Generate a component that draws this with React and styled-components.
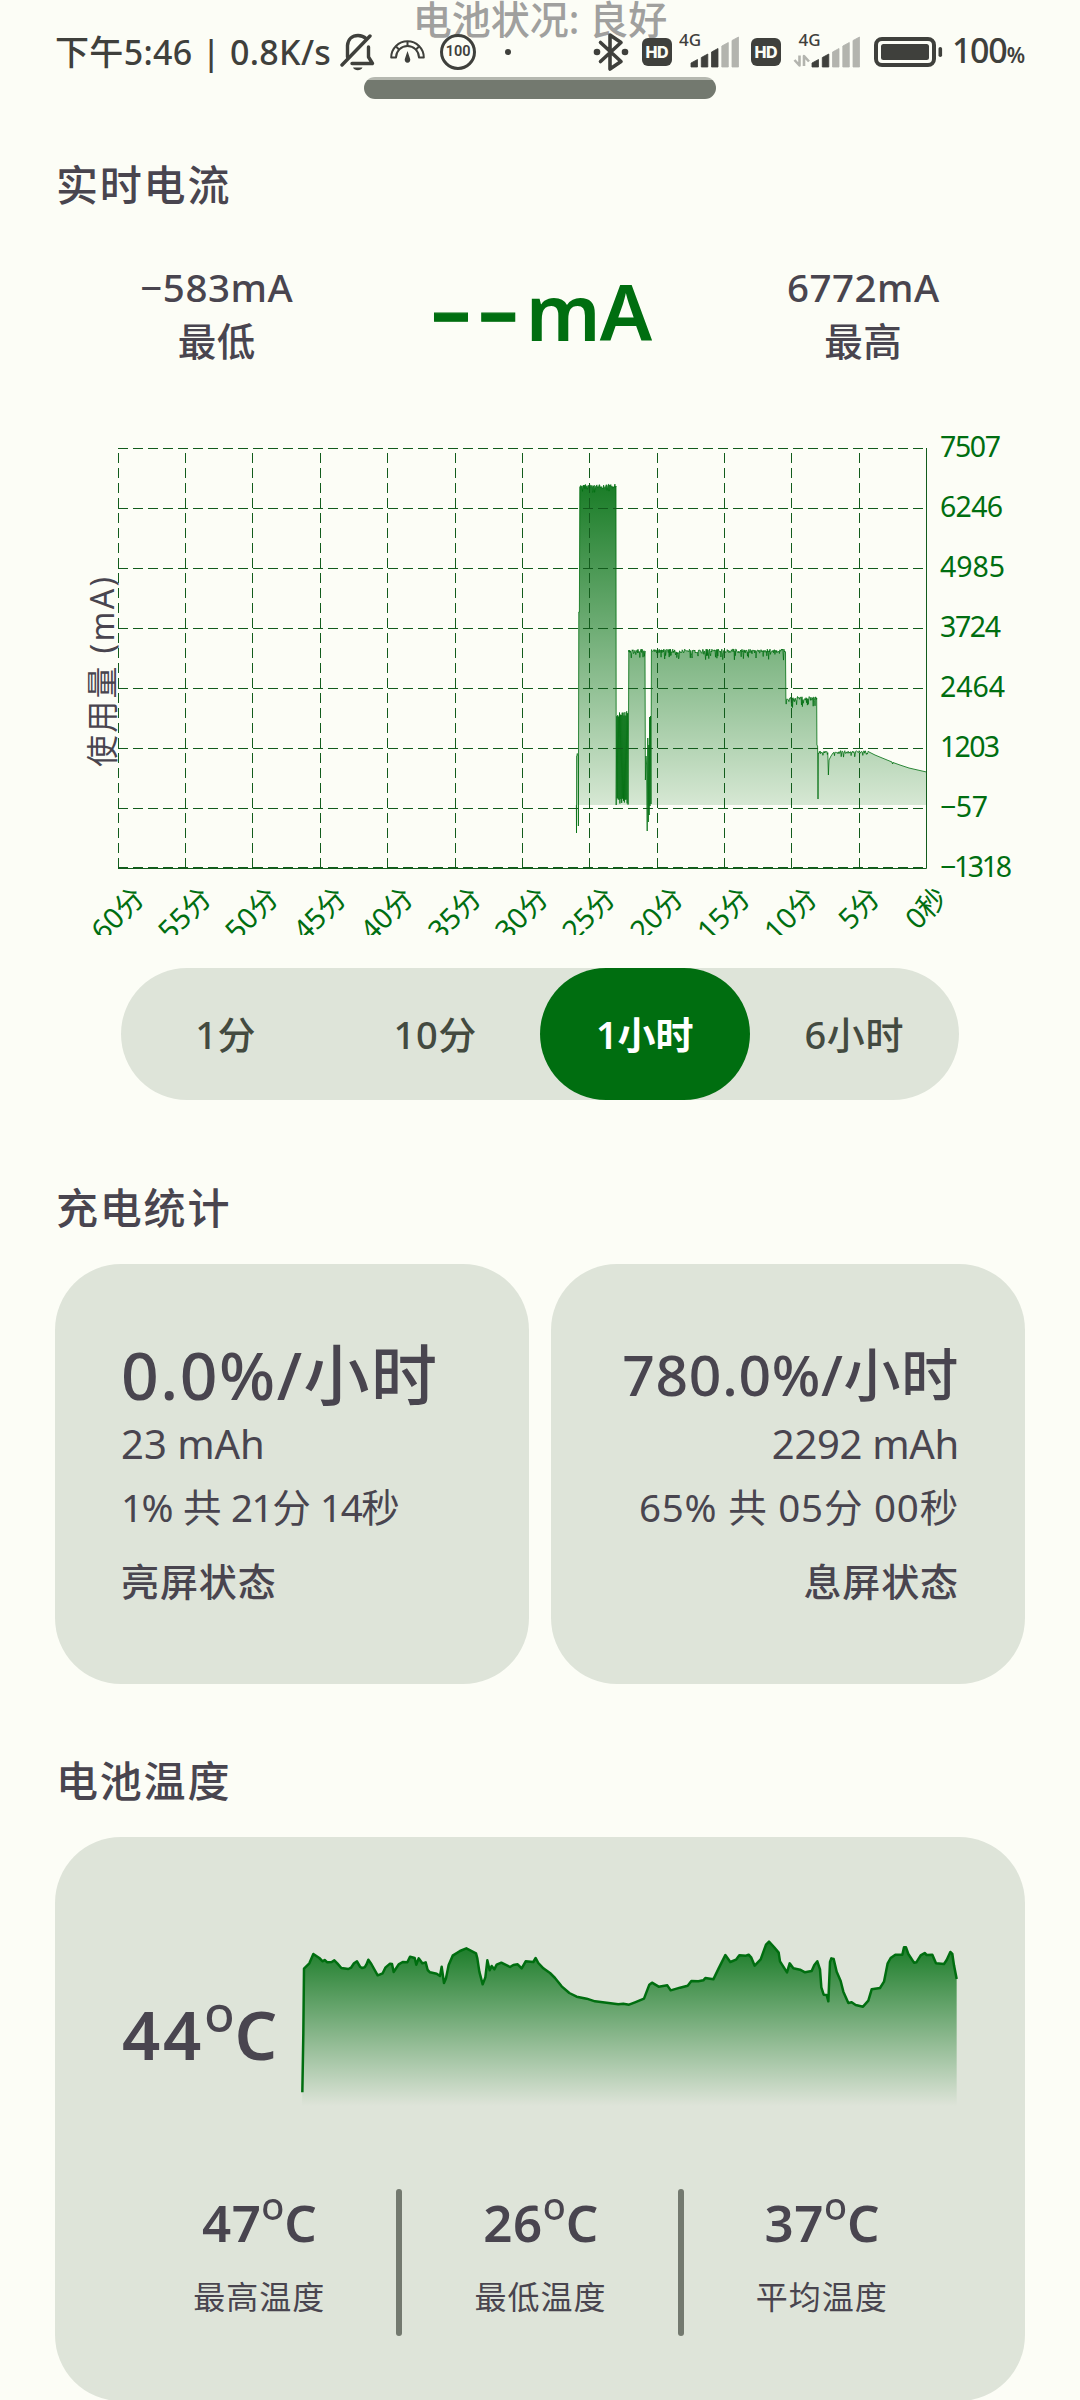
import React from "react";
import styled, { createGlobalStyle } from "styled-components";

const C = {
  bg: "#fcfdf6",
  card: "#dee4d9",
  ink: "#49454f",
  green: "#006e10",
  grid: "#125c1c",
  bar: "#73796f",
  status: "#3f403c",
  faint: "#b3b4ae",
};

const Global = createGlobalStyle`
  html, body { margin: 0; padding: 0; background: ${C.bg}; }
  body { font-family: "Noto Sans", "Noto Sans CJK SC", sans-serif; }
`;

const Page = styled.main`
  position: relative;
  box-sizing: border-box;
  width: 1080px;
  height: 2400px;
  padding: 0 55px;
  overflow: hidden;
  background: ${C.bg};
  color: ${C.ink};
  display: flex;
  flex-direction: column;

  & > * {
    flex: none;
  }
`;

/* ---------- status bar ---------- */

const StatusBar = styled.header`
  position: absolute;
  inset: 0 0 auto 0;
  height: 104px;
  box-sizing: border-box;
  padding: 0 55px;
  display: flex;
  align-items: center;
  justify-content: space-between;
  color: ${C.status};
`;

const StatusGroup = styled.div`
  display: flex;
  align-items: center;
  height: 44px;
`;

const StatusText = styled.span`
  font-size: 34px;
  font-weight: 500;
  line-height: 44px;
  white-space: pre;
  letter-spacing: ${(p) => p.$track || 0}px;
  margin-right: ${(p) => p.$after || 0}px;
`;

const Percent = styled.span`
  font-size: 21px;
  font-weight: 600;
  letter-spacing: 0;
`;

const Icon = styled.svg`
  display: block;
  flex: none;
  margin-right: ${(p) => p.$after || 0}px;
`;

const BellOff = () => (
  <Icon $after={15} width="35" height="38" viewBox="0 0 35 38" fill="none" stroke={C.status} strokeWidth="3.4" strokeLinecap="round" strokeLinejoin="round">
    <path d="M2 32 30 3" />
    <path d="M7.5 24V12.500C8 6 12.500 2.500 18 2.500c3.500 0 6 1 8 3" />
    <path d="M28.500 14v10l4 6.500H12" />
    <path d="M13 34.500h9.500c-1.500 3.500-8 3.500-9.500 0z" fill={C.status} stroke="none" />
  </Icon>
);

const Gauge = () => (
  <Icon $after={15} width="35" height="24" viewBox="0 0 35 24" fill="none" stroke={C.status} strokeWidth="2">
    <path d="M1.200 17.500a16.300 16.300 0 0 1 32.600 0h-4.800a11.500 11.500 0 0 0-23 0z" strokeLinejoin="round" />
    <path d="M17.500 1.500v5M6 6.500l3.500 3.500M29 6.500l-3.500 3.500" />
    <path d="M17.500 11l2.600 7.800a2.800 2.800 0 1 1-5.200 0z" fill={C.status} stroke="none" />
  </Icon>
);

const Badge = styled.div`
  box-sizing: border-box;
  width: 36px;
  height: 36px;
  border: 3px solid ${C.status};
  border-radius: 50%;
  display: flex;
  align-items: center;
  justify-content: center;
  font: 600 14.500px/1 Roboto, sans-serif;
  margin-right: 29px;
`;

const Dot = styled.i`
  width: 6px;
  height: 6px;
  border-radius: 50%;
  background: ${C.status};
`;

const Bluetooth = () => (
  <Icon $after={13} width="36" height="40" viewBox="0 0 36 40" fill="none" stroke={C.status} strokeWidth="3.600" strokeLinejoin="round" strokeLinecap="round">
    <path d="M7.500 10.500 28 29.500 17 37V3l11 7.500L7.500 29.500" />
    <circle cx="4" cy="20" r="3.300" fill={C.status} stroke="none" />
    <circle cx="32" cy="20" r="3.300" fill={C.status} stroke="none" />
  </Icon>
);

const Hd = styled.div`
  width: 30px;
  height: 28px;
  border-radius: 6px;
  background: ${C.status};
  color: ${C.bg};
  display: flex;
  align-items: center;
  justify-content: center;
  font: 800 16px/1 Inter, sans-serif;
  letter-spacing: -0.300px;
  margin-right: ${(p) => p.$after || 0}px;
`;

const bars = [
  [0, 26.500],
  [10.300, 21],
  [20.500, 15.500],
  [30.800, 9.500],
  [41, 4],
];

const Signal = ({ on, arrows, after }) => (
  <Icon $after={after} width={arrows ? 67 : 60} height="38" viewBox={arrows ? "-19 0 67 38" : "-12 0 60 38"}>
    <text x={arrows ? -13.500 : -12} y="13" fontSize="17" fontWeight="500" textLength="22" fill={C.status}>4G</text>
    {bars.map(([x, y], i) => (
      <path
        key={x}
        d={`M${x} 34V${y + 3.500}L${x + 6.500} ${y}V34z`}
        fill={i < on ? C.status : C.faint}
        stroke={i < on ? C.status : C.faint}
        strokeWidth="0.800"
        strokeLinejoin="round"
      />
    ))}
    {arrows && (
      <path d="M-12.500 22.500v10l-5-5.500M-8 33V23l5 5.500" fill="none" stroke={C.faint} strokeWidth="2.600" strokeLinejoin="round" />
    )}
  </Icon>
);

const Battery = () => (
  <Icon $after={9} width="69" height="30" viewBox="0 0 69 30">
    <rect x="2" y="2" width="58" height="26" rx="6" fill="none" stroke={C.status} strokeWidth="4" />
    <rect x="7" y="7" width="48" height="16" rx="2.500" fill={C.status} />
    <rect x="64.500" y="10" width="3.600" height="10" rx="1.800" fill={C.status} />
  </Icon>
);

/* ---------- common parts ---------- */

const HealthLine = styled.div`
  height: 38px;
  line-height: 38px;
  font-size: 39px;
  font-weight: 500;
  text-align: center;
  color: #a0a09e;
`;

const ProgressBar = styled.div`
  align-self: center;
  width: 352px;
  height: 22px;
  margin-top: 39px;
  border-radius: 11px;
  background: linear-gradient(#b5b8b0 3px, ${C.bar} 3px);
`;

const SectionTitle = styled.h2`
  margin: ${(p) => p.$top}px 0 ${(p) => p.$bottom || 0}px 1px;
  font-size: 42px;
  line-height: 60px;
  font-weight: 500;
  letter-spacing: 1.800px;
`;

const CurrentRow = styled.div`
  display: grid;
  grid-template-columns: repeat(3, 1fr);
  align-items: center;
  height: 108px;
  margin-top: 45px;
  text-align: center;
`;

const Extreme = styled.div`
  font-size: 38.500px;
  line-height: 54px;
  font-weight: 500;
  letter-spacing: 0.500px;
`;

const Current = styled.div`
  font-size: 78px;
  line-height: 90px;
  font-weight: 600;
  letter-spacing: -0.800px;
  color: ${C.green};
  margin: -2px 0 0 3px;
`;

const Dashes = styled.span`
  font-size: 67px;
  font-weight: 800;
  letter-spacing: 8px;
  -webkit-text-stroke: 1.200px ${C.green};
`;

const ChartSvg = styled.svg`
  display: block;
  width: 970px;
  height: 507px;
  margin-top: 60px;
  overflow: hidden;
`;

const Tabs = styled.nav`
  display: grid;
  grid-template-columns: repeat(4, 1fr);
  height: 132px;
  margin: 33px 66px 0;
  border-radius: 66px;
  background: ${C.card};
`;

const Tab = styled.button`
  border: 0;
  border-radius: 66px;
  background: ${(p) => (p.$active ? C.green : "transparent")};
  color: ${(p) => (p.$active ? "#fff" : "#434a40")};
  font: ${(p) => (p.$active ? 600 : 500)} 38px/60px "Noto Sans", "Noto Sans CJK SC", sans-serif;
  letter-spacing: ${(p) => (p.$active ? 0 : 0.600)}px;
  padding: 0 0 1px;
`;

const Cards = styled.div`
  display: grid;
  grid-template-columns: 1fr 1fr;
  gap: 22px;
`;

const Card = styled.section`
  box-sizing: border-box;
  height: ${(p) => p.$height}px;
  padding: ${(p) => p.$top}px 66px 0;
  border-radius: 66px;
  background: ${C.card};
  text-align: ${(p) => p.$align || "left"};
  white-space: nowrap;
`;

const Rate = styled.div`
  height: 81px;
  line-height: 84px;
  font-size: ${(p) => p.$size}px;
  font-weight: 500;
  letter-spacing: ${(p) => p.$track}px;
`;

const Capacity = styled.div`
  font-size: 40px;
  line-height: 61px;
  letter-spacing: ${(p) => p.$track || 0}px;
`;

const Duration = styled.div`
  font-size: 38.500px;
  line-height: 66px;
  letter-spacing: ${(p) => p.$track}px;
  word-spacing: ${(p) => p.$word || 0}px;
`;

const ScreenState = styled.div`
  margin-top: 11px;
  font-size: 38px;
  line-height: 60px;
  font-weight: 500;
  letter-spacing: 0.900px;
`;

const TempRow = styled.div`
  display: flex;
  justify-content: space-between;
  align-items: center;
  height: 202px;
`;

const TempNow = styled.div`
  font-size: 67px;
  line-height: 80px;
  font-weight: 600;
  letter-spacing: 2.800px;
  margin-left: 1px;
`;

const Degree = styled.span`
  position: relative;
  top: 0.040em;
  font-size: 1.200em;
  line-height: 0;
  font-weight: 400;
  letter-spacing: 0;
`;

const TempSvg = styled.svg`
  display: block;
  align-self: flex-start;
  width: 657px;
  height: 180px;
  margin-right: 1px;
`;

const TempStats = styled.div`
  display: grid;
  grid-template-columns: 1fr 6px 1fr 6px 1fr;
  height: 147px;
  margin-top: 54px;
  text-align: center;
`;

const Divider = styled.i`
  border-radius: 3px;
  background: ${C.bar};
`;

const TempValue = styled.div`
  margin-top: 3px;
  padding-left: 2px;
  font-size: 51px;
  line-height: 60px;
  font-weight: 600;
  letter-spacing: 0.500px;
`;

const TempLabel = styled.div`
  margin-top: 25px;
  padding-left: 1px;
  font-size: 32px;
  line-height: 40px;
  letter-spacing: 1px;
`;

/* ---------- current chart ---------- */

const columns = [118.500, 185.500, 252.500, 320.500, 387.500, 455.500, 522.500, 589.500, 657.500, 724.500, 791.500, 859.500, 926.500];
const xLabels = ["60分", "55分", "50分", "45分", "40分", "35分", "30分", "25分", "20分", "15分", "10分", "5分", "0秒"];
const yLabels = [
  ["7507", 61], ["6246", 63], ["4985", 65], ["3724", 61], ["2464", 65], ["1203", 60], ["−57", 48], ["−1318", 72],
];

function makeNoise(seed) {
  let s = seed;
  return () => {
    s = (s * 16807) % 2147483647;
    return s / 2147483647;
  };
}

function buildCurrent() {
  const rnd = makeNoise(4217);
  const pts = [];
  const plateau = (x0, x1, y, up, down) => {
    for (let x = x0; x <= x1; x += 0.45) {
      const spike = rnd();
      pts.push([x, y - up + rnd() * up * 2 + (spike > 0.8 ? down * rnd() : 0)]);
    }
  };
  pts.push([576.4, 805], [576.5, 833], [576.6, 756]);
  plateau(576.8, 578.2, 755, 2, 1);
  pts.push([578.4, 826], [578.8, 612], [579.4, 612], [579.8, 487]);
  plateau(580.2, 615.6, 486, 2, 7);
  pts.push([616, 486], [616.2, 805]);
  for (let x = 616.8; x < 627.6; x += 0.9) {
    pts.push([x, 711 + rnd() * 6], [x + 0.45, 806 - rnd() * 8]);
  }
  pts.push([628.2, 804], [628.8, 650]);
  plateau(629, 644.4, 651, 2, 6);
  pts.push([645, 651], [645.4, 780], [646, 756], [646.6, 765], [647.2, 831], [647.8, 738], [648.3, 822]);
  pts.push([648.8, 745], [649.2, 815], [649.6, 717], [650, 806], [650.5, 716], [651, 804], [651.4, 651]);
  plateau(651.6, 785.2, 651, 2, 8);
  pts.push([785.5, 652], [785.9, 701]);
  plateau(786.2, 816.4, 698.500, 2, 8);
  pts.push([816.7, 698], [816.9, 745], [817.6, 746], [818, 799], [818.4, 753]);
  plateau(818.8, 828, 752.500, 1.5, 3);
  pts.push([828.4, 775], [829, 760], [831, 756], [833, 753]);
  plateau(834, 869, 752, 1.5, 5);
  pts.push([875, 755], [881, 757.500], [892, 762], [892.6, 764], [893, 762.500], [900, 765], [909, 768], [926.5, 772]);
  return pts;
}

const currentLine = buildCurrent().map(([x, y]) => `${x.toFixed(1)},${y.toFixed(1)}`).join(" ");

const CurrentChart = () => (
  <ChartSvg viewBox="55 428 970 507">
    <defs>
      <linearGradient id="cur" gradientUnits="userSpaceOnUse" x1="0" y1="484" x2="0" y2="805">
        <stop offset="0" stopColor={C.green} stopOpacity="0.9" />
        <stop offset="1" stopColor={C.green} stopOpacity="0.15" />
      </linearGradient>
      <clipPath id="zero"><rect x="118" y="448" width="809" height="357" /></clipPath>
    </defs>
    <polygon clipPath="url(#zero)" fill="url(#cur)" points={`576.4,805 ${currentLine} 926.5,805`} />
    <polyline points={currentLine} fill="none" stroke={C.green} strokeOpacity="0.8" strokeWidth="1" />
    <g stroke={C.grid} strokeWidth="1" strokeDasharray="10 5" shapeRendering="crispEdges">
      {[448.5, 508.5, 568.5, 628.5, 688.5, 748.5, 808.5, 867.5].map((y) => (
        <path key={y} d={`M118 ${y}H926`} />
      ))}
      {columns.slice(0, -1).map((x) => (
        <path key={x} d={`M${x} 868V448`} />
      ))}
    </g>
    <path d="M118 868.500H926.500V448" fill="none" stroke={C.grid} />
    <g fill={C.green} fontSize="28.500">
      {yLabels.map(([t, w], i) => (
        <text key={t} x="940" y={456.500 + i * 60} textLength={w}>{t}</text>
      ))}
      {xLabels.map((t, i) => {
        const w = (t.length - 1) * 15.5 + 28;
        const x = columns[i] + 7 + w * 0.354;
        return (
          <text key={t} textAnchor="end" textLength={w + (t.length - 1)} transform={`translate(${x} 899.5) rotate(-45)`}>{t}</text>
        );
      })}
    </g>
    <text fill={C.ink} fontSize="32" textLength="190" transform="translate(114 767) rotate(-90)">使用量 (mA)</text>
  </ChartSvg>
);

/* ---------- temperature chart, units of a third of a pixel ---------- */

const tempLine =
  "67,577 70,400 72,206 88,190 100,162 118,174 128,184 134,180 142,187 155,186 163,181 172,190 184,204 205,207 213,203 222,190 231,184 240,200 246,204 254,202 260,192 265,179 274,192 293,226 308,220 316,203 330,191 336,192 341,216 356,193 368,186 382,187 390,170 404,174 409,194 416,175 427,190 437,187 443,210 450,217 470,221 480,228 485,200 492,249 498,235 506,195 518,167 540,153 559,145 588,160 592,175 598,215 608,253 616,232 622,181 629,211 635,198 643,208 650,194 664,188 690,201 700,195 713,193 725,205 737,184 760,186 767,174 775,189 790,205 810,219 825,234 845,259 868,279 890,290 920,296 945,304 980,308 1015,313 1030,311 1047,314 1065,307 1092,296 1108,254 1116,248 1136,260 1162,256 1172,271 1200,263 1223,257 1234,243 1255,244 1270,241 1276,234 1300,238 1316,205 1336,165 1351,186 1368,179 1378,166 1398,167 1406,164 1414,173 1424,197 1442,178 1458,134 1467,125 1482,141 1496,158 1500,184 1521,217 1529,190 1540,205 1560,209 1575,217 1595,213 1603,195 1612,184 1620,208 1624,262 1631,284 1640,285 1645,304 1650,186 1654,175 1661,177 1670,215 1682,243 1690,275 1705,309 1715,307 1727,315 1749,320 1765,302 1775,268 1800,264 1812,245 1823,190 1832,174 1846,164 1867,164 1872,142 1878,142 1885,162 1902,188 1909,187 1922,166 1934,159 1940,165 1957,164 1968,190 1992,192 2000,180 2011,156 2017,162 2022,196 2030,237";

const TempChart = () => (
  <TempSvg viewBox="63 99 1971 540">
    <defs>
      <linearGradient id="tmp" gradientUnits="userSpaceOnUse" x1="0" y1="126" x2="0" y2="618">
        <stop offset="0" stopColor={C.green} stopOpacity="0.9" />
        <stop offset="1" stopColor={C.green} stopOpacity="0" />
      </linearGradient>
    </defs>
    <polygon fill="url(#tmp)" points={`66,618 ${tempLine} 2030,618`} />
    <polyline points={tempLine} fill="none" stroke={C.green} strokeWidth="7.500" strokeLinejoin="round" />
  </TempSvg>
);

const Temp = ({ value }) => (
  <>
    {value}
    <Degree>º</Degree>C
  </>
);

export default function App() {
  return (
    <Page>
      <Global />
      <HealthLine>电池状况: 良好</HealthLine>
      <ProgressBar />

      <SectionTitle $top={56}>实时电流</SectionTitle>
      <CurrentRow>
        <Extreme>−583mA<br />最低</Extreme>
        <Current><Dashes>−−</Dashes>mA</Current>
        <Extreme>6772mA<br />最高</Extreme>
      </CurrentRow>
      <CurrentChart />
      <Tabs>
        <Tab>1分</Tab>
        <Tab>10分</Tab>
        <Tab $active>1小时</Tab>
        <Tab>6小时</Tab>
      </Tabs>

      <SectionTitle $top={78} $bottom={26}>充电统计</SectionTitle>
      <Cards>
        <Card $height={420} $top={68}>
          <Rate $size={66} $track={1.5}>0.0%/小时</Rate>
          <Capacity>23 mAh</Capacity>
          <Duration $track={-1.4} $word={2.2}>1% 共 21分 14秒</Duration>
          <ScreenState>亮屏状态</ScreenState>
        </Card>
        <Card $height={420} $top={68} $align="right">
          <Rate $size={57} $track={0.7}>780.0%/小时</Rate>
          <Capacity $track={-0.3}>2292 mAh</Capacity>
          <Duration $track={0.8}>65% 共 05分 00秒</Duration>
          <ScreenState>息屏状态</ScreenState>
        </Card>
      </Cards>

      <SectionTitle $top={67} $bottom={26}>电池温度</SectionTitle>
      <Card $height={564} $top={96}>
        <TempRow>
          <TempNow><Temp value="44" /></TempNow>
          <TempChart />
        </TempRow>
        <TempStats>
          <div>
            <TempValue><Temp value="47" /></TempValue>
            <TempLabel>最高温度</TempLabel>
          </div>
          <Divider />
          <div>
            <TempValue><Temp value="26" /></TempValue>
            <TempLabel>最低温度</TempLabel>
          </div>
          <Divider />
          <div>
            <TempValue><Temp value="37" /></TempValue>
            <TempLabel>平均温度</TempLabel>
          </div>
        </TempStats>
      </Card>

      <StatusBar>
        <StatusGroup>
          <StatusText $after={9} $track={0.33}>下午5:46 | 0.8K/s</StatusText>
          <BellOff />
          <Gauge />
          <Badge>100</Badge>
          <Dot />
        </StatusGroup>
        <StatusGroup>
          <Bluetooth />
          <Hd $after={7}>HD</Hd>
          <Signal on={3} after={12} />
          <Hd $after={12}>HD</Hd>
          <Signal on={2} arrows after={14} />
          <Battery />
          <StatusText $track={-1.2}>100<Percent>%</Percent></StatusText>
        </StatusGroup>
      </StatusBar>
    </Page>
  );
}
